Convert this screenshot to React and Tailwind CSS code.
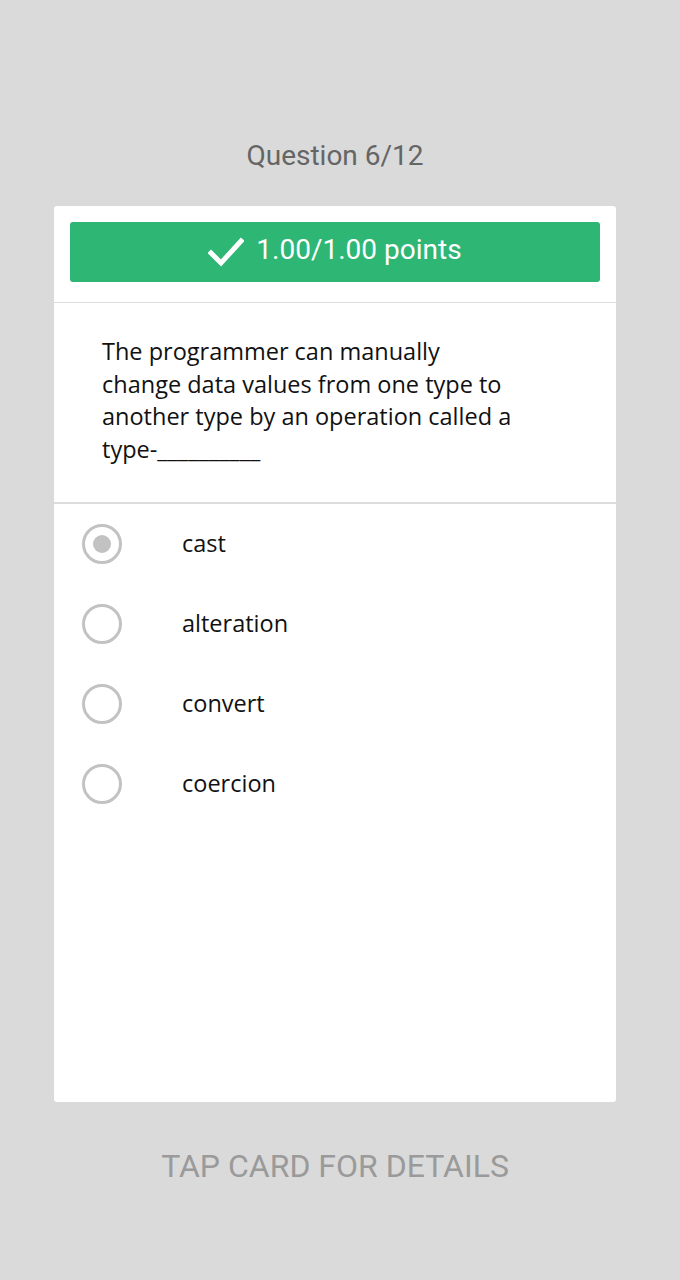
const options = ["cast", "alteration", "convert", "coercion"]

const App = () => {
  return (
    <div className="w-[680px] h-[1280px] bg-[#dadada] font-['Roboto',sans-serif]">
      <div className="w-[670px] flex flex-col items-center">
        <div className="mt-[138px] h-[36px] text-[28px] leading-[36px] text-[#656565]">Question 6/12</div>
        <div className="mt-[32px] w-[562px] h-[896px] bg-white rounded-[3px] flex flex-col">
          <div className="px-4 pt-4 pb-5 border-b border-[#dcdcdc]">
            <div className="h-[60px] bg-[#2db674] rounded-[3px] flex items-center justify-center gap-[12px] text-white">
              <svg width="36" height="30" viewBox="0 0 36 30" fill="none">
                <path d="M3 16 L13 26 L33 4" stroke="white" strokeWidth="5" strokeLinecap="square" />
              </svg>
              <span className="text-[28px] leading-none pb-[4px]">1.00/1.00 points</span>
            </div>
          </div>
          <div className="pl-[48px] pt-[32px] pb-[37px] border-b-2 border-[#dcdcdc]">
            <p className="w-[460px] font-['Open_Sans',sans-serif] text-[23.5px] leading-[32.5px] text-[#111]">
              The programmer can manually<br />
              change data values from one type to<br />
              another type by an operation called a<br />
              type-__________
            </p>
          </div>
          <div className="flex flex-col">
            {options.map((opt, i) => (
              <div key={opt} className="h-[80px] flex items-center pl-[28px]">
                <div className="w-[40px] h-[40px] rounded-full border-[3px] border-[#c2c2c2] flex items-center justify-center">
                  {i === 0 && <div className="w-[18px] h-[18px] rounded-full bg-[#c2c2c2]" />}
                </div>
                <span className="ml-[60px] font-['Open_Sans',sans-serif] text-[23.5px] text-[#111]">{opt}</span>
              </div>
            ))}
          </div>
        </div>
        <div className="mt-[44px] text-[32px] leading-[40px] text-[#9a9a9a]">TAP CARD FOR DETAILS</div>
      </div>
    </div>
  )
}

export default App
